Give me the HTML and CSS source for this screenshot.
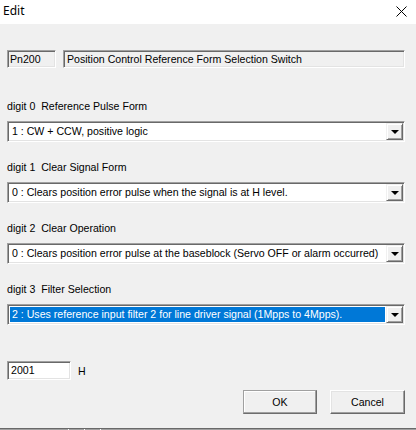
FILE: index.html
```html
<!DOCTYPE html>
<html>
<head>
<meta charset="utf-8">
<link rel="stylesheet" href="styles.css">
</head>
<body>
<div class="window">
  <div class="titlebar">
    <span class="title">Edit</span>
    <svg class="close" width="11" height="11" viewBox="0 0 11 11"><path d="M0.5 0.5 L10.5 10.5 M10.5 0.5 L0.5 10.5" stroke="#000" stroke-width="1" fill="none"/></svg>
  </div>
  <div class="content">
    <div class="header-row">
      <div class="field ro pn">Pn200</div>
      <div class="field ro desc">Position Control Reference Form Selection Switch</div>
    </div>

    <div class="group">
      <div class="label">digit 0  Reference Pulse Form</div>
      <div class="combo"><div class="combo-text">1 : CW + CCW, positive logic</div><div class="combo-btn"><span class="arrow"></span></div></div>
    </div>
    <div class="group">
      <div class="label">digit 1  Clear Signal Form</div>
      <div class="combo"><div class="combo-text">0 : Clears position error pulse when the signal is at H level.</div><div class="combo-btn"><span class="arrow"></span></div></div>
    </div>
    <div class="group">
      <div class="label">digit 2  Clear Operation</div>
      <div class="combo"><div class="combo-text">0 : Clears position error pulse at the baseblock (Servo OFF or alarm occurred)</div><div class="combo-btn"><span class="arrow"></span></div></div>
    </div>
    <div class="group">
      <div class="label">digit 3  Filter Selection</div>
      <div class="combo"><div class="combo-text selected">2 : Uses reference input filter 2 for line driver signal (1Mpps to 4Mpps).</div><div class="combo-btn"><span class="arrow"></span></div></div>
    </div>

    <div class="value-row">
      <div class="field edit">2001</div>
      <span class="unit">H</span>
    </div>

    <div class="button-row">
      <button class="btn default">OK</button>
      <button class="btn">Cancel</button>
    </div>
  </div>
  <div class="bottom-strip">
    <span class="tick t1"></span><span class="tick t2"></span><span class="tick t3"></span>
  </div>
</div>
</body>
</html>
```
FILE: styles.css
```css
html, body {
  margin: 0;
  padding: 0;
}
body {
  width: 416px;
  height: 430px;
  overflow: hidden;
  background: #f0f0f0;
  font-family: "Liberation Sans", Arial, sans-serif;
  font-size: 10.6px;
  color: #000;
}
.window {
  width: 416px;
  height: 430px;
  display: flex;
  flex-direction: column;
}
.titlebar {
  height: 24px;
  background: #fff;
  display: flex;
  align-items: center;
  justify-content: space-between;
  padding: 0 9px 0 3px;
  box-sizing: border-box;
}
.title {
  font-family: "Noto Sans", "Open Sans", sans-serif;
  font-size: 12px;
  position: relative;
  top: -2px;
}
.close {
  position: relative;
  top: -1px;
}
.content {
  flex: 1;
  padding: 26px 11px 0 7px;
  display: flex;
  flex-direction: column;
}
.header-row {
  display: flex;
  gap: 7px;
  height: 18px;
  margin-bottom: 32px;
}
.field {
  box-sizing: border-box;
  border: 1px solid;
  border-color: #a0a0a0 #fff #fff #a0a0a0;
  box-shadow: inset 1px 1px #696969, inset -1px -1px #e3e3e3;
  line-height: 16px;
  white-space: nowrap;
  overflow: hidden;
}
.ro {
  background: #f0f0f0;
}
.pn {
  width: 49px;
  padding-left: 2px;
}
.desc {
  flex: 1;
  padding-left: 3px;
}
.group {
  display: flex;
  flex-direction: column;
  margin-bottom: 19px;
}
.label {
  line-height: 13px;
  height: 13px;
  white-space: pre;
  margin-bottom: 8px;
}
.combo {
  box-sizing: border-box;
  height: 21px;
  display: flex;
  border: 1px solid;
  border-color: #a0a0a0 #fff #fff #a0a0a0;
  box-shadow: inset 1px 1px #696969, inset -1px -1px #e3e3e3;
  padding: 1px;
  background: #fff;
}
.combo-text {
  flex: 1;
  margin: 1px;
  padding-left: 2px;
  line-height: 15px;
  white-space: nowrap;
  overflow: hidden;
}
.combo-text.selected {
  background: #0078d7;
  color: #fff;
}
.combo-btn {
  width: 17px;
  box-sizing: border-box;
  background: #f0f0f0;
  border: 1px solid;
  border-color: #f0f0f0 #696969 #696969 #f0f0f0;
  box-shadow: inset 1px 1px #fff, inset -1px -1px #a0a0a0;
  display: flex;
  align-items: center;
  justify-content: center;
}
.arrow {
  width: 0;
  height: 0;
  border-left: 4px solid transparent;
  border-right: 4px solid transparent;
  border-top: 4px solid #000;
  margin-left: 1px;
}
.value-row {
  display: flex;
  align-items: center;
  margin-top: 17px;
  gap: 7px;
}
.edit {
  width: 64px;
  height: 19px;
  background: #fff;
  padding-left: 3px;
}
.button-row {
  display: flex;
  justify-content: flex-end;
  gap: 13px;
  margin-top: 10px;
}
.btn {
  box-sizing: border-box;
  height: 24px;
  width: 75px;
  font-family: "Liberation Sans", Arial, sans-serif;
  font-size: 10.6px;
  color: #000;
  background: #f0f0f0;
  border: 1px solid;
  border-color: #fff #696969 #696969 #fff;
  box-shadow: inset -1px -1px #a0a0a0, inset 1px 1px #e3e3e3;
  padding: 0;
}
.btn.default {
  width: 74px;
  border: 1px solid #6d6d6d;
  border-top-color: #a0a0a0;
  border-left-color: #a0a0a0;
  box-shadow: inset -1px -1px #a0a0a0, inset 1px 1px #fff;
}
.bottom-strip {
  height: 2px;
  background: #a0a0a0;
  border-top: 1px solid #696969;
  box-sizing: border-box;
  display: flex;
}
.tick {
  width: 1px;
  height: 2px;
  background: #fff;
}
.t1 { margin-left: 68px; }
.t2 { margin-left: 15px; }
.t3 { margin-left: 15px; }
```
